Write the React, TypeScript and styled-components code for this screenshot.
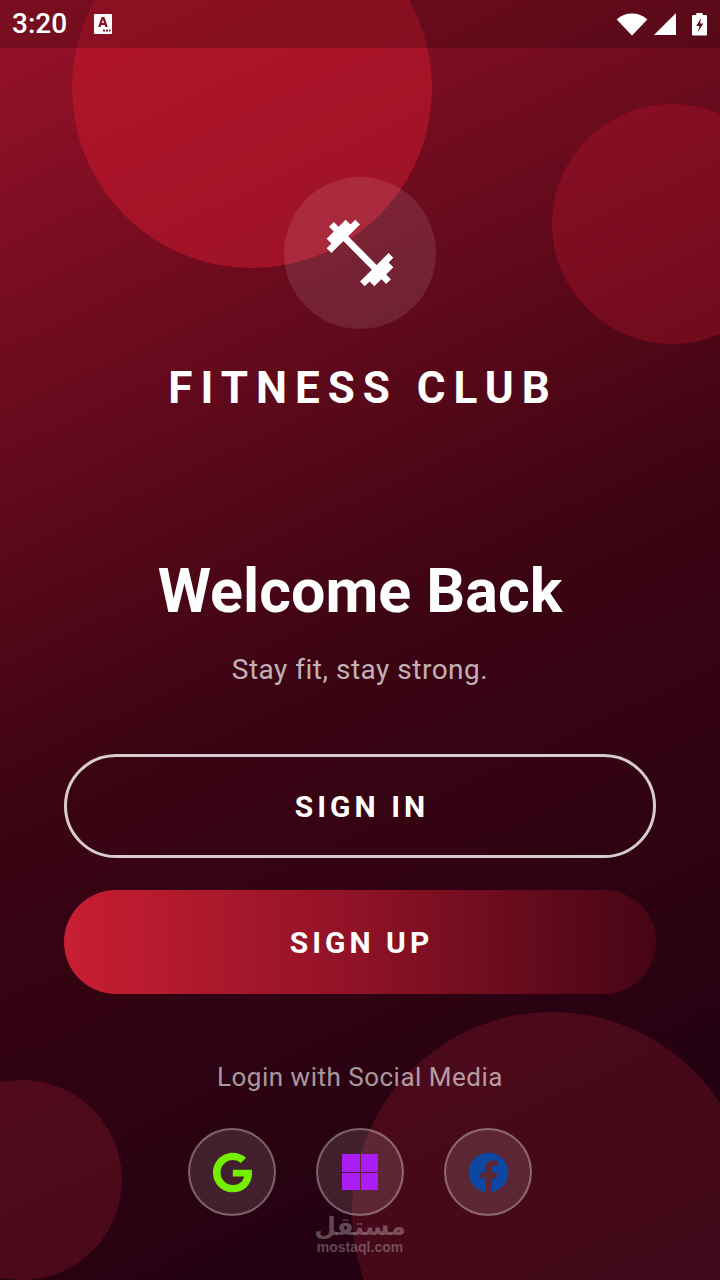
import React from "react";
import styled, { createGlobalStyle } from "styled-components";
import { FaFacebook, FaGoogle } from "react-icons/fa";
import { MdFitnessCenter } from "react-icons/md";

const GlobalStyle = createGlobalStyle`
  html, body {
    margin: 0;
    padding: 0;
    background: #1f0010;
  }
  * {
    box-sizing: border-box;
  }
`;

export default function App() {
  return (
    <Screen>
      <GlobalStyle />
      <Bubble $x={72} $y={-92} $size={360} $color="rgba(196, 24, 44, 0.58)" />
      <Bubble $x={552} $y={104} $size={240} $color="rgba(196, 24, 44, 0.31)" />
      <Bubble $x={-78} $y={1080} $size={200} $color="rgba(190, 40, 60, 0.22)" />
      <Bubble $x={352} $y={1012} $size={400} $color="rgba(190, 40, 60, 0.22)" />

      <StatusBar>
        <Clock>3:20</Clock>
        <NotifyIcon>
          <svg width="20" height="22" viewBox="0 0 20 22">
            <path
              fill="#fff"
              d="M2 1h16a1 1 0 0 1 1 1v18a1 1 0 0 1-1 1H2a1 1 0 0 1-1-1V2a1 1 0 0 1 1-1z"
            />
            <path fill="#8a1025" d="M8.6 4h2.800l3.400 10h-2.500l-.6-2H8.300l-.6 2H5.200zM9 10h2l-1-3.400z" />
            <path fill="#8a1025" d="M10 16.500h2v2h-2zM13 16.500h2v2h-2zM16 16.500h1.500v2H16z" />
          </svg>
        </NotifyIcon>
        <StatusIcons>
          <svg width="32" height="24" viewBox="0 0 32 24">
            <path fill="#fff" d="M16 23.500 0.700 7.400C5 3.300 10.200 1.500 16 1.500s11 1.800 15.300 5.900z" />
          </svg>
          <svg width="22" height="24" viewBox="0 0 22 24">
            <path fill="#fff" d="M22 1v22H0z" />
          </svg>
          <Battery width="15" height="24" viewBox="0 0 14 24" preserveAspectRatio="none">
            <path
              fill="#fff"
              d="M4 3V1h6v2h3a1 1 0 0 1 1 1v18.500a1 1 0 0 1-1 1H1a1 1 0 0 1-1-1V4a1 1 0 0 1 1-1z"
            />
            <path fill="#5a0819" d="M8.500 6 4 14h3l-1.500 6L10.500 11.500h-3z" />
          </Battery>
        </StatusIcons>
      </StatusBar>

      <Content>
        <LogoCircle>
          <MdFitnessCenter size={80} color="#fff" />
        </LogoCircle>
        <Brand>FITNESS CLUB</Brand>
        <Heading>Welcome Back</Heading>
        <Tagline>Stay fit, stay strong.</Tagline>
        <OutlineButton>SIGN IN</OutlineButton>
        <FilledButton>SIGN UP</FilledButton>
        <SocialLabel>Login with Social Media</SocialLabel>
        <SocialRow>
          <SocialButton>
            <FaGoogle size={41} color="#76ee00" />
          </SocialButton>
          <SocialButton>
            <WindowsGrid>
              <WindowsPane />
              <WindowsPane />
              <WindowsPane />
              <WindowsPane />
            </WindowsGrid>
          </SocialButton>
          <SocialButton>
            <FaFacebook size={41} color="#0d47a1" />
          </SocialButton>
        </SocialRow>
      </Content>

      <Watermark>
        <WatermarkArabic>مستقل</WatermarkArabic>
        <WatermarkLatin>mostaql.com</WatermarkLatin>
      </Watermark>
    </Screen>
  );
}

const Screen = styled.div`
  position: relative;
  width: 720px;
  height: 1280px;
  overflow: hidden;
  font-family: Roboto, "Liberation Sans", sans-serif;
  color: #fff;
  background: linear-gradient(155deg, #9a1229 0%, #3c0413 50%, #1c0010 100%);
`;

const Bubble = styled.div<{ $x: number; $y: number; $size: number; $color: string }>`
  position: absolute;
  left: ${(p) => p.$x}px;
  top: ${(p) => p.$y}px;
  width: ${(p) => p.$size}px;
  height: ${(p) => p.$size}px;
  border-radius: 50%;
  background: ${(p) => p.$color};
`;

const StatusBar = styled.div`
  position: relative;
  height: 48px;
  display: flex;
  align-items: center;
  padding: 0 13px 0 12px;
  background: rgba(0, 0, 0, 0.2);
`;

const Clock = styled.span`
  font-size: 28px;
  font-weight: 500;
  line-height: 48px;
`;

const NotifyIcon = styled.span`
  display: flex;
  margin-left: 26px;
`;

const StatusIcons = styled.div`
  margin-left: auto;
  display: flex;
  align-items: center;
  gap: 6px;
`;

const Battery = styled.svg`
  margin-left: 10px;
`;

const Content = styled.main`
  position: relative;
  display: flex;
  flex-direction: column;
  align-items: center;
  padding: 129px 64px 0;
`;

const LogoCircle = styled.div`
  width: 152px;
  height: 152px;
  border-radius: 50%;
  display: flex;
  align-items: center;
  justify-content: center;
  background: rgba(255, 255, 255, 0.1);
`;

const Brand = styled.h2`
  margin: 30px 0 0;
  padding-left: 6px;
  font-size: 44px;
  line-height: 58px;
  font-weight: 700;
  letter-spacing: 8px;
  white-space: nowrap;
`;

const Heading = styled.h1`
  margin: 138px 0 0;
  font-size: 61px;
  line-height: 72px;
  font-weight: 700;
  white-space: nowrap;
`;

const Tagline = styled.p`
  margin: 27px 0 0;
  font-size: 28px;
  line-height: 32px;
  letter-spacing: 0.5px;
  color: rgba(255, 255, 255, 0.7);
`;

const OutlineButton = styled.button`
  width: 592px;
  height: 104px;
  margin-top: 68px;
  padding-left: 10px;
  border: 3px solid rgba(255, 255, 255, 0.8);
  border-radius: 52px;
  background: transparent;
  color: #fff;
  font-family: inherit;
  font-size: 30px;
  font-weight: 700;
  letter-spacing: 4px;
`;

const FilledButton = styled.button`
  width: 592px;
  height: 104px;
  margin-top: 32px;
  padding-left: 9px;
  border: 0;
  border-radius: 52px;
  background: linear-gradient(90deg, #c81e32 0%, #8f1226 50%, #450515 100%);
  color: #fff;
  font-family: inherit;
  font-size: 30px;
  font-weight: 700;
  letter-spacing: 4px;
`;

const SocialLabel = styled.p`
  margin: 67px 0 0;
  font-size: 26px;
  line-height: 32px;
  letter-spacing: 0.5px;
  color: rgba(255, 255, 255, 0.6);
`;

const SocialRow = styled.div`
  display: flex;
  gap: 40px;
  margin-top: 35px;
`;

const SocialButton = styled.button`
  width: 88px;
  height: 88px;
  padding: 0;
  border: 2px solid rgba(255, 255, 255, 0.3);
  border-radius: 50%;
  display: flex;
  align-items: center;
  justify-content: center;
  background: rgba(255, 255, 255, 0.12);
`;

const WindowsGrid = styled.div`
  width: 36px;
  height: 36px;
  display: grid;
  grid-template-columns: 1fr 1fr;
  grid-template-rows: 1fr 1fr;
  gap: 1px;
`;

const WindowsPane = styled.span`
  background: #aa1ef5;
`;

const Watermark = styled.div`
  position: absolute;
  left: 260px;
  top: 1214px;
  width: 200px;
  display: flex;
  flex-direction: column;
  align-items: center;
  color: rgba(255, 255, 255, 0.28);
`;

const WatermarkArabic = styled.span`
  font-family: "DejaVu Sans", sans-serif;
  font-size: 25px;
  line-height: 26px;
  font-weight: 700;
`;

const WatermarkLatin = styled.span`
  font-family: "Liberation Sans", sans-serif;
  font-size: 14px;
  line-height: 14px;
  font-weight: 700;
`;
